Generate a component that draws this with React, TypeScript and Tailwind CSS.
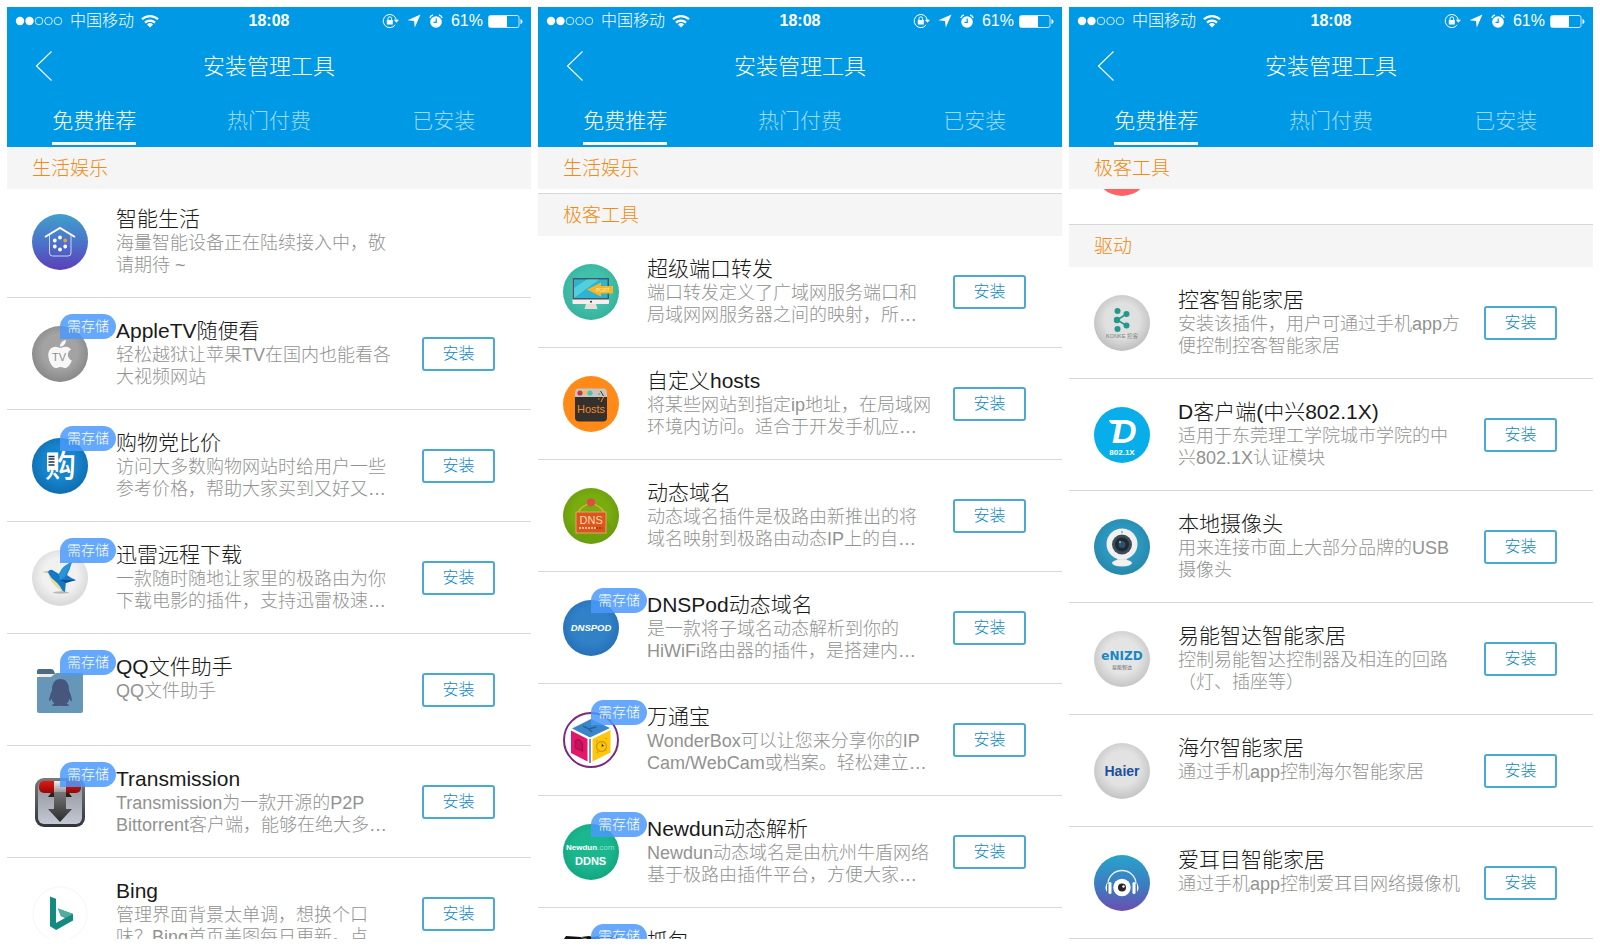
import type { ReactNode } from "react";
import { FaApple, FaQq } from "react-icons/fa";

type Plugin = {
  name: string;
  description: string;
  icon: ReactNode;
  needsStorage?: boolean;
  installable?: boolean;
};

type ScreenProps = {
  stickyTitle: string;
  children: ReactNode;
};

const TABS = ["免费推荐", "热门付费", "已安装"];

function Ball({ id, from, to }: { id: string; from: string; to: string }) {
  return (
    <>
      <defs>
        <radialGradient id={id} cx="0.5" cy="0.45" r="0.56">
          <stop offset="0.55" stopColor={from} />
          <stop offset="1" stopColor={to} />
        </radialGradient>
      </defs>
      <circle cx="28" cy="28" r="28" fill={`url(#${id})`} />
    </>
  );
}

function IconFrame({ children }: { children: ReactNode }) {
  return (
    <svg viewBox="0 0 56 56" className="block h-14 w-14" aria-hidden="true">
      {children}
    </svg>
  );
}

function SmartLifeIcon() {
  const dots = [0, 60, 120, 180, 240, 300];

  return (
    <IconFrame>
      <defs>
        <linearGradient id="smart-life" x1="0" y1="0" x2="0" y2="1">
          <stop offset="0" stopColor="#419fcb" />
          <stop offset="0.5" stopColor="#4b74cb" />
          <stop offset="1" stopColor="#5a40b8" />
        </linearGradient>
      </defs>
      <circle cx="28" cy="28" r="28" fill="url(#smart-life)" />
      <path d="M13 23 L28 14 L43 23" fill="none" stroke="#fff" strokeWidth="2" />
      <path
        d="M17.5 21 V39 Q17.5 42 20.5 42 H36 Q39 42 39 39 V21"
        fill="none"
        stroke="#c9d3f5"
        strokeWidth="1"
      />
      {dots.map((angle) => (
        <circle
          key={angle}
          cx="28"
          cy="23.5"
          r="1.9"
          fill={angle === 60 ? "#e8a13c" : "#fff"}
          transform={`rotate(${angle} 28 29.5)`}
        />
      ))}
    </IconFrame>
  );
}

function AppleTvIcon() {
  return (
    <IconFrame>
      <Ball id="apple-tv" from="#a3a3a3" to="#868686" />
      <FaApple x="12" y="12" size={32} color="#f7f7f7" />
      <text x="20" y="35" fontSize="11" fill="#8d8d8d" fontFamily="Liberation Sans, sans-serif">
        TV
      </text>
    </IconFrame>
  );
}

function ShoppingIcon() {
  return (
    <IconFrame>
      <Ball id="shopping" from="#1584cb" to="#0f6bb0" />
      <text
        x="13"
        y="39"
        fontSize="31"
        fontWeight="500"
        fill="#fff"
        fontFamily="Noto Sans CJK SC, sans-serif"
      >
        购
      </text>
      <rect x="15" y="15" width="9" height="17" fill="#fff" />
      <path d="M16.5 18.5h6M16.5 21h6M16.5 24h6M16.5 27h6" stroke="#26333f" strokeWidth="1.5" />
    </IconFrame>
  );
}

function ThunderIcon() {
  return (
    <IconFrame>
      <Ball id="thunder" from="#f1f1f1" to="#d6d6d6" />
      <ellipse cx="29" cy="42.5" rx="8" ry="1.2" fill="#b5b5b5" />
      <path d="M10 22 L17 21 L17 23 Z" fill="#c9b26a" />
      <path
        d="M16 22 Q18 18 22 21 L27 24 Q31 15 40 12 Q38 19 35 25 Q40 29 44 30 Q38 32 34 31 L33 42 Q30 41 27 38 Q20 33 16 22 Z"
        fill="#1478c4"
      />
      <path d="M27 24 Q31 15 40 12 Q37 18 33 27 L28 30 Z" fill="#2a94da" />
      <path d="M16 23 Q18 34 31 42 Q28 35 23 31 Q19 28 16 23 Z" fill="#e3dd9c" />
      <path d="M28 30 L44 30 L34 33 Z" fill="#0c4f92" />
    </IconFrame>
  );
}

function QqFolderIcon() {
  return (
    <IconFrame>
      <path d="M5 9 Q5 7 7 7 H19 Q21 7 22 9 L23 12 H5 Z" fill="#4a6b82" />
      <rect x="7" y="12" width="16" height="4" fill="#f1ece0" />
      <path d="M5 15 H19 L24 11 H49 Q51 11 51 13 V49 Q51 51 49 51 H7 Q5 51 5 49 Z" fill="#6797b8" />
      <FaQq x="15" y="17" size={27} color="#47567c" />
    </IconFrame>
  );
}

function TransmissionIcon() {
  return (
    <IconFrame>
      <defs>
        <linearGradient id="tr-frame" x1="0" y1="0" x2="0" y2="1">
          <stop offset="0" stopColor="#77797c" />
          <stop offset="1" stopColor="#303338" />
        </linearGradient>
        <linearGradient id="tr-plate" x1="0" y1="0" x2="0" y2="1">
          <stop offset="0" stopColor="#8c9097" />
          <stop offset="1" stopColor="#c4c8d4" />
        </linearGradient>
        <linearGradient id="tr-handle" x1="0" y1="0" x2="0" y2="1">
          <stop offset="0" stopColor="#e01a12" />
          <stop offset="1" stopColor="#920808" />
        </linearGradient>
        <linearGradient id="tr-bar" x1="0" y1="0" x2="0" y2="1">
          <stop offset="0" stopColor="#f0f0f2" />
          <stop offset="1" stopColor="#8f9196" />
        </linearGradient>
        <linearGradient id="tr-arrow" x1="0" y1="0" x2="0" y2="1">
          <stop offset="0" stopColor="#777" />
          <stop offset="1" stopColor="#2a2a2a" />
        </linearGradient>
      </defs>
      <rect x="3" y="4" width="50" height="49" rx="9" fill="url(#tr-frame)" />
      <rect x="6" y="7" width="44" height="43" rx="6" fill="url(#tr-plate)" />
      <path d="M16 23 L22 15 H34 L40 23 Z" fill="#222" />
      <rect x="7" y="7" width="42" height="12" rx="5" fill="url(#tr-handle)" />
      <rect x="22" y="7" width="12" height="12" fill="url(#tr-bar)" />
      <path d="M22 18 H34 V35 H40 L28 48 L16 35 H22 Z" fill="url(#tr-arrow)" />
    </IconFrame>
  );
}

function BingIcon() {
  return (
    <IconFrame>
      <circle cx="28" cy="28" r="27" fill="#fff" stroke="#f6f6f6" />
      <path
        d="M18 10.5 L24 12.8 V37 L33 32 L28.8 30 L26 22.5 L41 28 V34.5 L24.2 44 L18 40.2 Z"
        fill="#148a80"
      />
      <path d="M26 22.5 L41 28 L33 32 L28.8 30 Z" fill="#4fae9f" />
    </IconFrame>
  );
}

function PortIcon() {
  return (
    <IconFrame>
      <Ball id="port" from="#41c0aa" to="#36b19c" />
      <rect x="9.5" y="14" width="36.5" height="26" rx="1" fill="#f4efec" />
      <rect x="9.5" y="14" width="36.5" height="21.5" fill="#45586a" />
      <rect x="11" y="15.5" width="33.5" height="18.5" fill="#2fb4d0" />
      <path d="M11 34 V24 L24 15.5 H36 Z" fill="#52cfdc" />
      <circle cx="28" cy="37.7" r="1" fill="#333" />
      <path d="M23 40 H33 L34.5 45 H21.5 Z" fill="#e4dedb" />
      <path d="M24 25.5 L38 18.5 V22 H50 V29.5 H38 V32.5 Z" fill="#f5b529" />
      <text x="33" y="28" fontSize="5" fill="#fbe08a" fontWeight="700" fontFamily="Liberation Sans, sans-serif">
        PORT
      </text>
    </IconFrame>
  );
}

function HostsIcon() {
  return (
    <IconFrame>
      <circle cx="28" cy="28" r="28" fill="#ff8a17" />
      <rect x="12" y="13" width="32" height="32.5" rx="4" fill="#33302e" />
      <path d="M12 21 V16 Q12 12.5 15.5 12.5 H40.5 Q44 12.5 44 16 V21 Z" fill="#c9c5c1" />
      <circle cx="17" cy="17" r="2.6" fill="#c3364d" />
      <circle cx="22" cy="17" r="2.3" fill="#edc04c" />
      <circle cx="27" cy="17" r="2.6" fill="#4cc2ac" />
      <path d="M37.5 15 L40.5 20 M35.5 18 H36.5" stroke="#3b3532" strokeWidth="1" />
      <path d="M40.5 21 L38 26 M35 23 H36.5" stroke="#ff8a17" strokeWidth="1" />
      <text x="14" y="37" fontSize="11" fill="#f08a26" fontFamily="Liberation Sans, sans-serif">
        Hosts
      </text>
    </IconFrame>
  );
}

function DnsIcon() {
  return (
    <IconFrame>
      <Ball id="dns" from="#79ad0f" to="#689a0c" />
      <path d="M13 45 L20 54 Q40 58 50 42 L43 30 Z" fill="#6c9f0c" />
      <path d="M15 24.5 Q18 18 28 15 Q38 18 41 24.5" fill="none" stroke="#e5b53c" strokeWidth="1.3" />
      <circle cx="28" cy="14.5" r="4" fill="#e34a44" />
      <rect x="13" y="24" width="30" height="21" fill="#d9571c" stroke="#e9a468" strokeWidth="1" />
      <text x="16.5" y="36" fontSize="11" fill="#fbd9b0" fontFamily="Liberation Sans, sans-serif">
        DNS
      </text>
      <path d="M16 40 H33" stroke="#fbd9b0" strokeWidth="1.6" strokeDasharray="2 1" />
      <path d="M33 40 H40" stroke="#a33c10" strokeWidth="1.6" strokeDasharray="2 1" />
    </IconFrame>
  );
}

function DnspodIcon() {
  return (
    <IconFrame>
      <Ball id="dnspod" from="#3181c9" to="#2670b5" />
      <text
        x="28"
        y="31"
        textAnchor="middle"
        fontSize="9.5"
        fontWeight="700"
        fontStyle="italic"
        fill="#fff"
        fontFamily="Liberation Sans, sans-serif"
      >
        DNSPOD
      </text>
    </IconFrame>
  );
}

function WonderBoxIcon() {
  return (
    <IconFrame>
      <circle cx="28" cy="28" r="27" fill="#fff" stroke="#7b2a7d" strokeWidth="2" />
      <path d="M9 16.5 L28 7 L47 16 L27 25.5 Z" fill="#3a86c8" />
      <path d="M20 14 L26 17 L33 15 M26 17 L29 20" fill="none" stroke="#27639c" strokeWidth="1.5" />
      <path d="M8 18.5 L24.5 27 V49.5 L8 41 Z" fill="#e3186a" />
      <path d="M12.5 36 V29 Q16 25 19.5 32 V39 Z" fill="#c51259" stroke="#a80f4f" strokeWidth="1.3" />
      <path d="M29.5 27 L47.5 18 V40.5 L29.5 49.5 Z" fill="#fdc70c" />
      <circle cx="38.5" cy="34.5" r="5" fill="none" stroke="#d39a10" strokeWidth="1.3" />
      <path
        d="M38.5 31.5 V35 L41 34 M33 30 L35 28 M42 26 L44 27 M35 39 L34 41.5 M42 37 L43.5 39"
        stroke="#d39a10"
      />
      <path d="M27 27 V51" stroke="#3a6fb8" strokeWidth="1.5" />
    </IconFrame>
  );
}

function NewdunIcon() {
  return (
    <IconFrame>
      <Ball id="newdun" from="#1bb890" to="#12a57f" />
      <text x="3" y="26" fontSize="8" fontWeight="700" fill="#fff" fontFamily="Liberation Sans, sans-serif">
        Newdun
        <tspan fontWeight="400" fill="#8fe0c8">
          .com
        </tspan>
      </text>
      <text x="12" y="41" fontSize="11" fontWeight="700" fill="#fff" fontFamily="Liberation Sans, sans-serif">
        DDNS
      </text>
    </IconFrame>
  );
}

function CaptureIcon() {
  return (
    <IconFrame>
      <path d="M1 3 L3 0 L18 1 L26 0 L30 1 L36 0 L42 1 L54 0 L55 4 V52 H1 Z" fill="#111" />
      <path d="M18 1.5 L24 3 M33 2 H38 M44 2.5 H50" stroke="#888" />
    </IconFrame>
  );
}

function KonkeIcon() {
  return (
    <IconFrame>
      <Ball id="konke" from="#e0e0e0" to="#bdbdbd" />
      <path d="M32.5 19 L23 25 L32.5 30.5" fill="none" stroke="#1f9a8c" strokeWidth="1.5" />
      <g fill="#1f9a8c">
        <circle cx="23.5" cy="16" r="3" />
        <circle cx="32.5" cy="19" r="3" />
        <circle cx="23" cy="25" r="3.2" />
        <circle cx="32.5" cy="30.5" r="3" />
        <circle cx="23.5" cy="34" r="3" />
      </g>
      <text
        x="28"
        y="43"
        textAnchor="middle"
        fontSize="5.5"
        fill="#7d7d7d"
        fontFamily="Liberation Sans, Noto Sans CJK SC, sans-serif"
      >
        KONKE 控客
      </text>
    </IconFrame>
  );
}

function DClientIcon() {
  return (
    <IconFrame>
      <circle cx="28" cy="28" r="28" fill="#08aeea" />
      <path d="M15 13 H26 L25 17 H19 Q16 17 15 13 Z" fill="#fff" />
      <text
        x="18"
        y="36"
        fontSize="34"
        fontWeight="700"
        fontStyle="italic"
        fill="#fff"
        fontFamily="Liberation Sans, sans-serif"
      >
        D
      </text>
      <text
        x="28"
        y="48"
        textAnchor="middle"
        fontSize="8"
        fontWeight="700"
        fill="#fff"
        fontFamily="Liberation Sans, sans-serif"
      >
        802.1X
      </text>
    </IconFrame>
  );
}

function CameraIcon() {
  return (
    <IconFrame>
      <Ball id="camera" from="#2c98bf" to="#2787ab" />
      <path d="M24 38 H32 L34 43 H22 Z" fill="#cfcfcf" />
      <ellipse cx="28" cy="44" rx="10" ry="3.5" fill="#f3f1ef" />
      <circle cx="28" cy="25" r="15.5" fill="#f3f1ef" />
      <circle cx="28" cy="25.5" r="10" fill="#3d4c59" />
      <circle cx="28" cy="25.5" r="7" fill="#1f2a35" />
      <circle cx="28" cy="25.5" r="3.5" fill="#2e5267" />
      <circle cx="26" cy="23" r="1.2" fill="#7fa3b5" />
      <circle cx="28" cy="13" r="1" fill="#999" />
    </IconFrame>
  );
}

function EnizoIcon() {
  return (
    <IconFrame>
      <Ball id="enizo" from="#e4e4e4" to="#c4c4c4" />
      <text
        x="28"
        y="29"
        textAnchor="middle"
        fontSize="12"
        fontWeight="700"
        fill="#1787c5"
        fontFamily="DejaVu Sans, sans-serif"
      >
        eNIZD
      </text>
      <text
        x="28"
        y="38"
        textAnchor="middle"
        fontSize="5"
        fill="#666"
        fontFamily="Noto Sans CJK SC, sans-serif"
      >
        易能智达
      </text>
    </IconFrame>
  );
}

function HaierIcon() {
  return (
    <IconFrame>
      <Ball id="haier" from="#e2e2e2" to="#c2c2c2" />
      <text
        x="28"
        y="33"
        textAnchor="middle"
        fontSize="14"
        fontWeight="700"
        fill="#1c4f9c"
        fontFamily="Liberation Sans, sans-serif"
      >
        Haier
      </text>
    </IconFrame>
  );
}

function EarEyeIcon() {
  return (
    <IconFrame>
      <defs>
        <linearGradient id="ear-eye" x1="0" y1="0" x2="0" y2="1">
          <stop offset="0" stopColor="#28a3cb" />
          <stop offset="0.55" stopColor="#3d7cc0" />
          <stop offset="1" stopColor="#6c4eb0" />
        </linearGradient>
      </defs>
      <circle cx="28" cy="28" r="28" fill="url(#ear-eye)" />
      <path d="M14 29 A14 13.5 0 0 1 42 29" fill="none" stroke="#e6f1fa" strokeWidth="1.3" />
      <path d="M13 28 Q10 32.5 13 37 Z M43 28 Q46 32.5 43 37 Z" fill="#fff" />
      <rect x="14.5" y="27" width="3" height="12" rx="1.5" fill="#fff" />
      <rect x="38.5" y="27" width="3" height="12" rx="1.5" fill="#fff" />
      <circle cx="28" cy="32.5" r="8.7" fill="#fff" />
      <circle cx="28" cy="32.5" r="4" fill="#2a2226" />
      <circle cx="29.5" cy="31.5" r="1.2" fill="#fff" />
    </IconFrame>
  );
}

const LIFE_PLUGINS: Plugin[] = [
  {
    name: "智能生活",
    description: "海量智能设备正在陆续接入中，敬\n请期待 ~",
    icon: <SmartLifeIcon />,
    installable: false,
  },
  {
    name: "AppleTV随便看",
    description: "轻松越狱让苹果TV在国内也能看各\n大视频网站",
    icon: <AppleTvIcon />,
    needsStorage: true,
  },
  {
    name: "购物党比价",
    description: "访问大多数购物网站时给用户一些\n参考价格，帮助大家买到又好又…",
    icon: <ShoppingIcon />,
    needsStorage: true,
  },
  {
    name: "迅雷远程下载",
    description: "一款随时随地让家里的极路由为你\n下载电影的插件，支持迅雷极速…",
    icon: <ThunderIcon />,
    needsStorage: true,
  },
  {
    name: "QQ文件助手",
    description: "QQ文件助手",
    icon: <QqFolderIcon />,
    needsStorage: true,
  },
  {
    name: "Transmission",
    description: "Transmission为一款开源的P2P\nBittorrent客户端，能够在绝大多…",
    icon: <TransmissionIcon />,
    needsStorage: true,
  },
  {
    name: "Bing",
    description: "管理界面背景太单调，想换个口\n味？Bing首页美图每日更新。点…",
    icon: <BingIcon />,
  },
];

const GEEK_PLUGINS: Plugin[] = [
  {
    name: "超级端口转发",
    description: "端口转发定义了广域网服务端口和\n局域网网服务器之间的映射，所…",
    icon: <PortIcon />,
  },
  {
    name: "自定义hosts",
    description: "将某些网站到指定ip地址，在局域网\n环境内访问。适合于开发手机应…",
    icon: <HostsIcon />,
  },
  {
    name: "动态域名",
    description: "动态域名插件是极路由新推出的将\n域名映射到极路由动态IP上的自…",
    icon: <DnsIcon />,
  },
  {
    name: "DNSPod动态域名",
    description: "是一款将子域名动态解析到你的\nHiWiFi路由器的插件，是搭建内…",
    icon: <DnspodIcon />,
    needsStorage: true,
  },
  {
    name: "万通宝",
    description: "WonderBox可以让您来分享你的IP\nCam/WebCam或档案。轻松建立…",
    icon: <WonderBoxIcon />,
    needsStorage: true,
  },
  {
    name: "Newdun动态解析",
    description: "Newdun动态域名是由杭州牛盾网络\n基于极路由插件平台，方便大家…",
    icon: <NewdunIcon />,
    needsStorage: true,
  },
  {
    name: "抓包",
    description: "",
    icon: <CaptureIcon />,
    needsStorage: true,
  },
];

const DRIVER_PLUGINS: Plugin[] = [
  {
    name: "控客智能家居",
    description: "安装该插件，用户可通过手机app方\n便控制控客智能家居",
    icon: <KonkeIcon />,
  },
  {
    name: "D客户端(中兴802.1X)",
    description: "适用于东莞理工学院城市学院的中\n兴802.1X认证模块",
    icon: <DClientIcon />,
  },
  {
    name: "本地摄像头",
    description: "用来连接市面上大部分品牌的USB\n摄像头",
    icon: <CameraIcon />,
  },
  {
    name: "易能智达智能家居",
    description: "控制易能智达控制器及相连的回路\n（灯、插座等）",
    icon: <EnizoIcon />,
  },
  {
    name: "海尔智能家居",
    description: "通过手机app控制海尔智能家居",
    icon: <HaierIcon />,
  },
  {
    name: "爱耳目智能家居",
    description: "通过手机app控制爱耳目网络摄像机",
    icon: <EarEyeIcon />,
  },
];

function StatusBar() {
  return (
    <div className="grid h-7 grid-cols-[1fr_auto_1fr] items-center px-2 text-base leading-7">
      <div className="flex items-center gap-[7px]">
        <svg width="48" height="10" viewBox="0 0 48 10" aria-hidden="true">
          <circle cx="5" cy="5" r="4.2" fill="#fff" />
          <circle cx="14.5" cy="5" r="4.2" fill="#fff" />
          <g fill="none" stroke="#fff" strokeWidth="0.8">
            <circle cx="24" cy="5" r="3.8" />
            <circle cx="33.5" cy="5" r="3.8" />
            <circle cx="43" cy="5" r="3.8" />
          </g>
        </svg>
        <span className="font-light">中国移动</span>
        <svg width="18" height="14" viewBox="0 0 18 14" aria-hidden="true">
          <g fill="none" stroke="#fff" strokeWidth="2.2">
            <path d="M1 5.3 A11.5 11.5 0 0 1 17 5.3" />
            <path d="M4 8.6 A7.2 7.2 0 0 1 14 8.6" />
          </g>
          <path d="M9 13.5 L6 10.5 A4.3 4.3 0 0 1 12 10.5 Z" fill="#fff" />
        </svg>
      </div>
      <time className="font-bold">18:08</time>
      <div className="flex items-center justify-end">
        <svg width="17" height="16" viewBox="0 0 17 16" className="mr-2" aria-hidden="true">
          <path d="M13.2 11.8 A6.6 6.6 0 1 1 14.3 7" fill="none" stroke="#fff" strokeWidth="1" />
          <path d="M11.8 6.8 H17 L14.4 9.8 Z" fill="#fff" />
          <rect x="4.8" y="7" width="6" height="4.5" fill="#fff" />
          <path d="M6 7.2 V5.6 A1.8 1.8 0 0 1 9.6 5.6 V7.2" fill="none" stroke="#fff" strokeWidth="1" />
        </svg>
        <svg width="14" height="14" viewBox="0 0 14 14" className="mr-2" aria-hidden="true">
          <path d="M13.5 0.5 L7.8 13.5 L7 7 L0.5 6.2 Z" fill="#fff" />
        </svg>
        <svg width="14" height="15" viewBox="0 0 14 15" className="mr-2" aria-hidden="true">
          <circle cx="7" cy="8" r="5.8" fill="#fff" />
          <path d="M0.8 4 Q1.5 1.5 4 1 M13.2 4 Q12.5 1.5 10 1" fill="none" stroke="#fff" strokeWidth="1.3" />
          <path d="M7.2 4.5 V8.4 H4.5" fill="none" stroke="#0099e6" strokeWidth="1.2" />
        </svg>
        <span className="mr-[5px]">61%</span>
        <svg width="35" height="13" viewBox="0 0 35 13" aria-hidden="true">
          <rect x="0.5" y="0.5" width="30.5" height="12" rx="2" fill="none" stroke="#fff" strokeOpacity="0.8" />
          <rect x="1" y="1" width="18" height="11" fill="#fff" />
          <path d="M32.5 4 Q34.5 4.5 34.5 6.5 Q34.5 8.5 32.5 9 Z" fill="#fff" />
        </svg>
      </div>
    </div>
  );
}

function ScreenHeader() {
  return (
    <header className="bg-[#0099e6] text-white">
      <StatusBar />
      <div className="grid h-[62px] grid-cols-[1fr_auto_1fr] items-center">
        <button type="button" aria-label="返回" className="w-16 pl-7">
          <svg width="18" height="30" viewBox="0 0 18 30" className="block" aria-hidden="true">
            <path d="M16.5 0.5 L1.5 15 L16.5 29.5" fill="none" stroke="#fff" strokeWidth="1.1" />
          </svg>
        </button>
        <h1 className="pt-px text-[22px] leading-8 font-light">安装管理工具</h1>
      </div>
      <nav className="grid h-[50px] grid-cols-3">
        {TABS.map((tab, index) => (
          <button
            key={tab}
            type="button"
            className="flex items-end justify-center pb-0.5 text-[21px] leading-[43px] font-light"
          >
            <span
              className={
                index === 0
                  ? "border-b-[3px] border-white"
                  : "border-b-[3px] border-transparent text-[#9bdaf9]"
              }
            >
              {tab}
            </span>
          </button>
        ))}
      </nav>
    </header>
  );
}

function SectionTitle({ children }: { children: ReactNode }) {
  return (
    <h2 className="h-[42px] bg-[#f5f5f5] pl-[25px] text-[19px] leading-[44px] font-light text-[#f08a10]">
      {children}
    </h2>
  );
}

function PluginRow({ plugin }: { plugin: Plugin }) {
  const { name, description, icon, needsStorage = false, installable = true } = plugin;

  return (
    <li className="flex h-28 items-center border-b border-[#d8d8d8] pr-9 pl-[25px]">
      <div className="relative flex-shrink-0">
        {icon}
        {needsStorage ? (
          <span className="absolute -top-3 left-7 flex h-[25px] w-14 items-center justify-center rounded-full rounded-bl-none bg-[#4a99fb]/85 text-sm font-light text-white">
            需存储
          </span>
        ) : null}
      </div>
      <div className="ml-7 h-[72px] min-w-0 flex-1">
        <h3 className="text-[21px] leading-[26px] font-light whitespace-nowrap text-[#1a1a1a]">
          {name}
        </h3>
        <p className="text-lg leading-[22px] font-light whitespace-pre text-[#929292]">
          {description}
        </p>
      </div>
      {installable ? (
        <button
          type="button"
          aria-label={`安装 ${name}`}
          className="h-[34px] w-[73px] flex-shrink-0 rounded-[3px] border-2 border-[#4aa8d4] pt-px text-base leading-[28px] font-light text-[#0f88c4]"
        >
          安装
        </button>
      ) : null}
    </li>
  );
}

function PluginList({ plugins }: { plugins: Plugin[] }) {
  return (
    <ul>
      {plugins.map((plugin) => (
        <PluginRow key={plugin.name} plugin={plugin} />
      ))}
    </ul>
  );
}

function Screen({ stickyTitle, children }: ScreenProps) {
  return (
    <section className="flex min-h-0 min-w-0 flex-col overflow-hidden bg-white">
      <ScreenHeader />
      <SectionTitle>{stickyTitle}</SectionTitle>
      <div className="min-h-0 flex-1 overflow-hidden">{children}</div>
    </section>
  );
}

export default function App() {
  return (
    <main className="grid h-screen grid-cols-3 grid-rows-1 gap-[7px] bg-white p-[7px] font-['Liberation_Sans','Noto_Sans_CJK_SC',sans-serif]">
      <Screen stickyTitle="生活娱乐">
        {/* scrolled a few pixels under the sticky title */}
        <div className="-mt-[3px]">
          <PluginList plugins={LIFE_PLUGINS} />
        </div>
      </Screen>
      <Screen stickyTitle="生活娱乐">
        <div className="h-[5px] border-b border-[#d8d8d8]" />
        <SectionTitle>极客工具</SectionTitle>
        <PluginList plugins={GEEK_PLUGINS} />
      </Screen>
      <Screen stickyTitle="极客工具">
        <div className="flex h-9 items-end overflow-hidden border-b border-[#d8d8d8] pb-7 pl-[25px]">
          <div className="h-14 w-14 flex-shrink-0 rounded-full bg-[#ff6266]" />
        </div>
        <SectionTitle>驱动</SectionTitle>
        <PluginList plugins={DRIVER_PLUGINS} />
      </Screen>
    </main>
  );
}
